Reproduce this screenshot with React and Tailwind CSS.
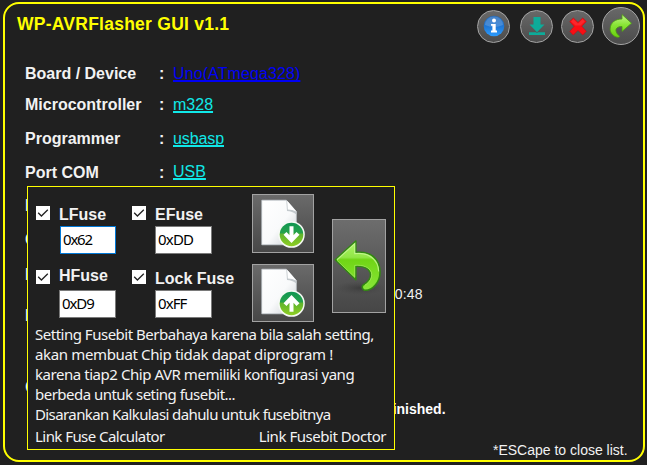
import React from "react";

const fields = [
  { label: "Board / Device", value: "Uno(ATmega328)", h: "h-[31px]", color: "text-[#0000f5]", tracking: "tracking-[0.1px]" },
  { label: "Microcontroller", value: "m328", h: "h-[32px]", color: "text-[#10e8e8]" },
  { label: "Programmer", value: "usbasp", h: "h-[35px]", color: "text-[#10e8e8]", tracking: "tracking-[-0.1px]" },
  { label: "Port COM", value: "USB", h: "h-[33px]", color: "text-[#10e8e8]", up: true },
];

function RoundButton({ size, children }) {
  return (
    <button className={`${size} flex shrink-0 items-center justify-center rounded-full border border-[#a6a6a6] bg-linear-to-b from-[#686868] to-[#4c4c4c]`}>
      {children}
    </button>
  );
}

function InfoIcon() {
  return (
    <svg width="22" height="22" viewBox="0 0 22 22">
      <defs>
        <linearGradient id="info" x1="0" y1="0" x2="0" y2="1">
          <stop offset="0" stopColor="#2268b8" />
          <stop offset=".5" stopColor="#1f75d2" />
          <stop offset="1" stopColor="#2b9cff" />
        </linearGradient>
      </defs>
      <circle cx="11" cy="11" r="10.3" fill="url(#info)" />
      <path d="M2 10a9 8.5 0 0 1 18 0q-9 4-18 0z" fill="#fff" opacity=".18" />
      <circle cx="11" cy="5.6" r="2" fill="#fff" />
      <path d="M8 9h4.7v6.6H14v1.8H8v-1.8h1.4v-4.8H8z" fill="#fff" />
    </svg>
  );
}

function DownloadIcon() {
  return (
    <svg width="18" height="20" viewBox="0 0 18 20">
      <path d="M5.5 1h7v7.5h4L9 16.2 1.5 8.5h4z" fill="#0dab99" />
      <path d="M1 16.3h7l1 .7 1-.7h7V19H1z" fill="#0dab99" />
    </svg>
  );
}

function CloseIcon() {
  return (
    <svg width="18" height="19" viewBox="0 0 18 19">
      <path d="M4.3 1 9 5.4 13.7 1 17.3 4.5 12.8 9.3l4.5 5L13.8 18 9 13.4 4.2 18 .8 14.4l4.3-5L.7 4.6z" fill="#f80e14" stroke="#c90710" strokeWidth=".5" />
      <path d="M4.3 2 9 6.5 13.7 2l2.2 2.4L11.5 8.5h-5L2 4.5z" fill="#ff5358" opacity=".35" />
    </svg>
  );
}

function ForwardIcon() {
  return (
    <svg width="24" height="26" viewBox="0 0 24 26">
      <defs>
        <linearGradient id="forward" x1="0" y1="0" x2="0" y2="1">
          <stop offset="0" stopColor="#c5f58b" />
          <stop offset=".45" stopColor="#89e536" />
          <stop offset="1" stopColor="#6ad00e" />
        </linearGradient>
      </defs>
      <path d="M13 1.5 22.5 10.2 13 18.5v-5c-4.5-.2-6.8 2.3-5.9 5 .5 2 1.8 3.3 3.7 4.8-.5 1.2-1.7 1.3-3.8.6C2.8 22 .8 18.8 1.2 15.2 1.7 9.5 6.3 6 13 6z" fill="url(#forward)" stroke="#4b9b13" strokeWidth=".8" />
    </svg>
  );
}

function FileIcon({ up }) {
  const id = up ? "save" : "load";
  return (
    <svg width="44" height="50" viewBox="0 0 44 50">
      <defs>
        <linearGradient id={`${id}-page`} x1="0" y1="0" x2="1" y2="1">
          <stop offset="0" stopColor="#fff" />
          <stop offset=".55" stopColor="#f9fafb" />
          <stop offset="1" stopColor="#c9ced3" />
        </linearGradient>
        <linearGradient id={`${id}-disc`} x1="0" y1="0" x2="0" y2="1">
          <stop offset="0" stopColor="#109653" />
          <stop offset=".42" stopColor="#26a24b" />
          <stop offset=".5" stopColor="#61b52c" />
          <stop offset="1" stopColor="#8fce24" />
        </linearGradient>
      </defs>
      <path d="M.8 1.2h24.5l10 11.2v33.4H.8z" fill={`url(#${id}-page)`} stroke="#cbd3d9" strokeWidth=".7" />
      <path d="M25.3 1.2q3.1 3.8 2 8.4 4-.6 8 2.8v3q-4-3.5-9.3-3.5Z" fill="#c3c9cd" />
      <path d="m26.2 1.8.6 8.7q4.5 0 8.5 1.9z" fill="#fff" />
      <circle cx="30.5" cy="35.5" r="13.3" fill="#f7faf5" />
      <circle cx="30.5" cy="35.5" r="11.8" fill={`url(#${id}-disc)`} />
      <g transform={up ? "rotate(180 30.5 35.5)" : undefined}>
        <path d="M28.5 27.2h4v9l3-3.2 3 2.8-8 8.1-8-8.1 3-2.8 3 3.2z" fill="#fff" />
      </g>
    </svg>
  );
}

function BackIcon() {
  return (
    <svg width="52" height="58" viewBox="0 0 52 58" className="shrink-0">
      <defs>
        <linearGradient id="back" x1="0" y1="0" x2="0" y2="1">
          <stop offset="0" stopColor="#b0f569" />
          <stop offset=".33" stopColor="#91e647" />
          <stop offset=".38" stopColor="#70d515" />
          <stop offset="1" stopColor="#89e739" />
        </linearGradient>
        <radialGradient id="shade">
          <stop offset="0" stopColor="#363636" stopOpacity=".75" />
          <stop offset="1" stopColor="#444" stopOpacity="0" />
        </radialGradient>
      </defs>
      <ellipse cx="27" cy="51" rx="25" ry="7" fill="url(#shade)" />
      <path d="M2.3 22.8 22.8 4v11.2h3.5C38.5 14.8 47 22.7 47 35.5c0 9.7-7.5 17.8-14.5 17.8-3 0-4.4-3.7-2-5.6 5.2-2.5 8-7.6 6.7-12.1-1.5-4.2-5.9-6.8-14.4-6.3v13.5z" fill="url(#back)" stroke="#328812" strokeWidth="1.6" strokeLinejoin="round" />
      <path d="M4 22.7 21.8 6.5V16.6c13-1.6 23.6 5.4 23.9 18" fill="none" stroke="#c8f996" strokeWidth="1.2" opacity=".8" />
      <path d="m4 23.3 17.8 17V28.4c8-.8 15 2 16.6 7.1 1.3 4.9-1.7 9.6-6.4 12.6" fill="none" stroke="#b2f16e" strokeWidth=".9" opacity=".7" />
    </svg>
  );
}

function CheckBox() {
  return (
    <span className="-mt-[2px] mr-px flex size-[14px] shrink-0 items-center justify-center bg-white">
      <svg width="14" height="14" viewBox="0 0 14 14"><path d="m2.2 6.8 3.2 3.2L11.8 3.8" fill="none" stroke="#222" strokeWidth="1.3" /></svg>
    </span>
  );
}

function Check({ label, className = "", textClass = "" }) {
  return (
    <label className={`flex h-[18px] items-center pl-px ${className}`}>
      <CheckBox />
      <span className={`ml-[8px] whitespace-nowrap text-[16px] leading-[18px] font-bold text-[#f2f2f2] ${textClass}`}>{label}</span>
    </label>
  );
}

function HexInput({ value, className }) {
  return (
    <input readOnly value={value} className={`block h-[28px] border bg-white pb-[2px] pl-[2px] font-['Noto_Sans',sans-serif] text-[15px] text-black outline-none ${className}`} />
  );
}

function FuseDialog() {
  return (
    <section className="absolute top-[186px] left-[27px] flex h-[264px] w-[368px] flex-col border border-[#ffff00] bg-[#202020]">
      <div className="flex h-[137px] shrink-0">
        <div className="w-[96px] pt-[18px] pl-[7px]">
          <Check label="LFuse" textClass="mt-[2px]" />
          <HexInput value="0x62" className="mt-[3px] ml-[25px] w-[56px] border-[#0078d7] tracking-[-1.2px]" />
          <Check label="HFuse" className="mt-[15px]" textClass="-mt-[4px]" />
          <HexInput value="0xD9" className="mt-[3px] ml-[24px] w-[57px] border-[#7a7a7a] tracking-[-1.1px]" />
        </div>
        <div className="w-[128px] pt-[18px] pl-[7px]">
          <Check label="EFuse" textClass="mt-[2px]" />
          <HexInput value="0xDD" className="mt-[3px] ml-[24px] w-[57px] border-[#7a7a7a] tracking-[-0.8px]" />
          <Check label="Lock Fuse" className="mt-[15px]" textClass="mt-[2px] -ml-px" />
          <HexInput value="0xFF" className="mt-[3px] ml-[24px] w-[57px] border-[#7a7a7a] tracking-[-0.9px]" />
        </div>
        <div className="flex w-[80px] flex-col gap-[11px] pt-[7px]">
          <button className="flex h-[59px] w-[62px] shrink-0 items-start border border-[#a2a2a2] bg-linear-to-b from-[#6a6a6a] to-[#484848] pt-[4px] pl-[8px]"><FileIcon /></button>
          <button className="flex h-[58px] w-[62px] shrink-0 items-start border border-[#a2a2a2] bg-linear-to-b from-[#6a6a6a] to-[#484848] pt-[3px] pl-[8px]"><FileIcon up /></button>
        </div>
        <button className="mt-[32px] flex h-[94px] w-[54px] items-start border border-[#a2a2a2] bg-linear-to-b from-[#6d6d6d] to-[#464646] pt-[17px]"><BackIcon /></button>
      </div>
      <div className="pl-[7px] font-['Noto_Sans',sans-serif] text-[15px] leading-[20px] whitespace-nowrap text-[#f3f3f3]">
        <p className="tracking-[-0.49px]">Setting Fusebit Berbahaya karena bila salah setting,</p>
        <p className="tracking-[-0.36px]">akan membuat Chip tidak dapat diprogram !</p>
        <p className="tracking-[-0.45px]">karena tiap2 Chip AVR memiliki konfigurasi yang</p>
        <p className="tracking-[-0.52px]">berbeda untuk seting fusebit...</p>
        <p className="tracking-[-0.6px]">Disarankan Kalkulasi dahulu untuk fusebitnya</p>
        <div className="mt-[2px] flex justify-between pr-[8px] tracking-[-0.55px]">
          <span>Link Fuse Calculator</span>
          <span className="tracking-[-0.46px]">Link Fusebit Doctor</span>
        </div>
      </div>
    </section>
  );
}

export default function App() {
  return (
    <main className="relative h-[465px] w-[647px] overflow-hidden bg-[#202020] pt-[2px] pl-[3px] font-['Liberation_Sans',Arial,sans-serif]">
      <div className="flex h-[460px] w-[642px] flex-col rounded-[16px] border-2 border-[#ffff00]">
        <header className="flex h-[54px] shrink-0 justify-between pl-[12px]">
          <h1 className="pt-[10px] text-[17.5px] leading-[20px] font-bold tracking-[0.25px] text-[#ffff00]">WP-AVRFlasher GUI v1.1</h1>
          <nav className="flex h-[44px] items-center pr-[3px]">
            <RoundButton size="size-[33px]"><InfoIcon /></RoundButton>
            <span className="w-[10px]" />
            <RoundButton size="size-[33px]"><DownloadIcon /></RoundButton>
            <span className="w-[8px]" />
            <RoundButton size="size-[33px]"><CloseIcon /></RoundButton>
            <span className="w-[8px]" />
            <RoundButton size="size-[38px]"><ForwardIcon /></RoundButton>
          </nav>
        </header>
        <div className="pl-[20px] text-[16px] text-[#f2f2f2]">
          {fields.map((f) => (
            <div key={f.label} className={`flex items-center ${f.h}`}>
              <b className="w-[134px]">{f.label}</b>
              <b className="w-[14px]">:</b>
              <a className={`underline decoration-[1.5px] underline-offset-1 [text-decoration-skip-ink:none] ${f.color} ${f.tracking ?? ""} ${f.up ? "-mt-[2px]" : ""}`}>{f.value}</a>
            </div>
          ))}
          <b className="flex h-[34px] items-center">P</b>
          <b className="flex h-[34px] items-center">C</b>
          <div className="flex h-[34px] items-start pt-[6px]">
            <b>P</b>
            <span className="mt-[22px] ml-[351px] text-[14px] leading-[18px] tracking-[0.2px]">20:48</span>
          </div>
          <b className="flex h-[50px] items-center">P</b>
          <b className="flex h-[92px] items-center text-[19px] leading-[20px]">C</b>
        </div>
      </div>
      <b className="absolute top-[400px] left-[388px] text-[14px] leading-[18px] text-white">finished.</b>
      <span className="absolute top-[441px] left-[493px] text-[14px] leading-[18px] text-[#f2f2f2]">*ESCape to close list.</span>
      <FuseDialog />
    </main>
  );
}
